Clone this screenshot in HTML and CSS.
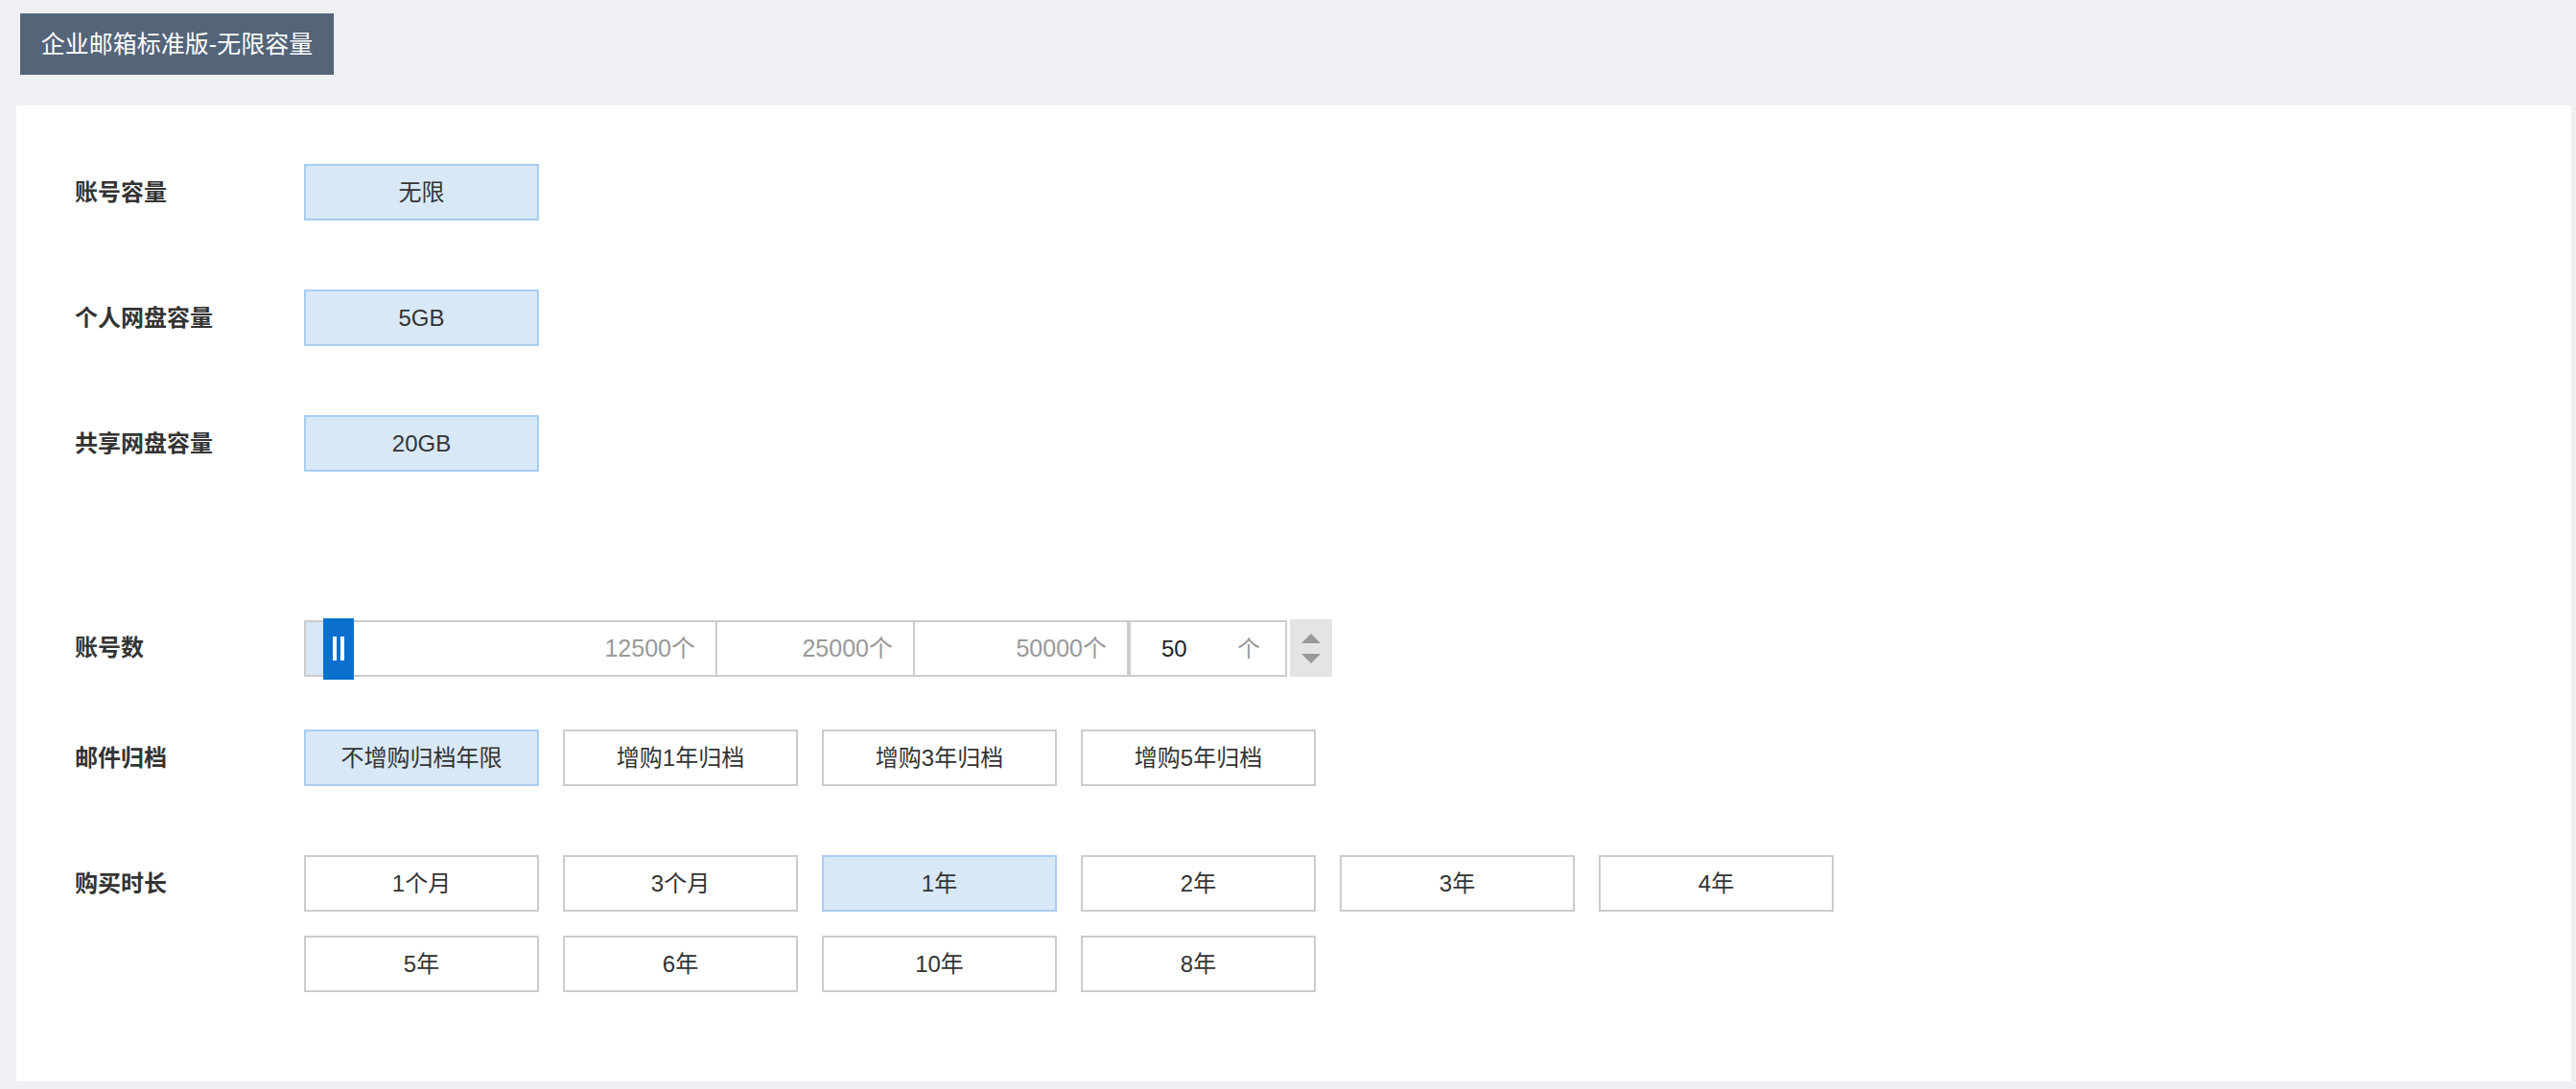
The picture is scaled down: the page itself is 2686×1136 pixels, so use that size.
FILE: index.html
```html
<!DOCTYPE html>
<html lang="zh-CN">

<head>
    <meta charset="UTF-8">
    <meta name="viewport" content="width=device-width, initial-scale=1.0">
    <title>企业邮箱标准版</title>
    <link rel="stylesheet" href="styles.css">
</head>

<body>
    <div class="page">
        <div class="title">企业邮箱标准版-无限容量</div>

        <div class="panel">
            <div class="row">
                <div class="label">账号容量</div>
                <div class="options">
                    <div class="opt active">无限</div>
                </div>
            </div>
            <div class="row">
                <div class="label">个人网盘容量</div>
                <div class="options">
                    <div class="opt active">5GB</div>
                </div>
            </div>
            <div class="row row-wide">
                <div class="label">共享网盘容量</div>
                <div class="options">
                    <div class="opt active">20GB</div>
                </div>
            </div>

            <div class="row row-slim">
                <div class="label">账号数</div>
                <div class="slider">
                    <div class="track">
                        <div class="fill"></div>
                        <div class="handle"><i></i><i></i></div>
                        <div class="seg seg1">12500个</div>
                        <div class="seg seg2">25000个</div>
                        <div class="seg seg3">50000个</div>
                    </div>
                    <div class="count">
                        <span class="num">50</span>
                        <span class="unit">个</span>
                    </div>
                    <div class="spin">
                        <span class="up"></span>
                        <span class="down"></span>
                    </div>
                </div>
            </div>

            <div class="row">
                <div class="label">邮件归档</div>
                <div class="options">
                    <div class="opt active">不增购归档年限</div>
                    <div class="opt">增购1年归档</div>
                    <div class="opt">增购3年归档</div>
                    <div class="opt">增购5年归档</div>
                </div>
            </div>

            <div class="row row-last">
                <div class="label">购买时长</div>
                <div class="options">
                    <div class="opt">1个月</div>
                    <div class="opt">3个月</div>
                    <div class="opt active">1年</div>
                    <div class="opt">2年</div>
                    <div class="opt">3年</div>
                    <div class="opt">4年</div>
                    <div class="opt">5年</div>
                    <div class="opt">6年</div>
                    <div class="opt">10年</div>
                    <div class="opt">8年</div>
                </div>
            </div>
        </div>
    </div>
</body>

</html>
```

FILE: styles.css
```css
* {
    margin: 0;
    padding: 0;
    box-sizing: border-box;
}

body {
    background-color: #eef0f4;
    font-family: "Liberation Sans", "Noto Sans CJK SC", sans-serif;
    color: #333;
}

.page {
    padding: 14px 5px 8px 17px;
}

.title {
    margin-left: 4px;
    width: 327px;
    height: 64px;
    line-height: 64px;
    text-align: center;
    white-space: nowrap;
    background-color: #546479;
    color: #fff;
    font-size: 25px;
}

.panel {
    margin-top: 32px;
    background-color: #fff;
    padding: 61px 0 93px 61px;
}

.row {
    display: flex;
    align-items: flex-start;
    margin-bottom: 72px;
}

.row-wide {
    margin-bottom: 154px;
}

.row-slim {
    margin-bottom: 55px;
}

.row-last {
    margin-bottom: 0;
}

.label {
    width: 239px;
    flex-shrink: 0;
    height: 59px;
    line-height: 59px;
    font-size: 24px;
    font-weight: bold;
    color: #333;
}

.options {
    display: flex;
    flex-wrap: wrap;
    gap: 25px;
    width: 1620px;
}

.opt {
    width: 245px;
    height: 59px;
    line-height: 55px;
    border: 2px solid #cccccc;
    text-align: center;
    font-size: 24px;
    color: #333;
    background-color: #fff;
}

.opt.active {
    background-color: #d8e8f7;
    border-color: #a9cdee;
}

/* 账号数滑块 */
.slider {
    display: flex;
    align-items: center;
}

.track {
    position: relative;
    display: flex;
    width: 860px;
    height: 59px;
    border: 2px solid #cccccc;
}

.fill {
    position: absolute;
    left: 0;
    top: 0;
    width: 20px;
    height: 100%;
    background-color: #d8e8f7;
}

.handle {
    position: absolute;
    left: 18px;
    top: -4px;
    width: 32px;
    height: 64px;
    background-color: #0b70cd;
    display: flex;
    justify-content: center;
    align-items: center;
    gap: 4px;
}

.handle i {
    width: 4px;
    height: 25px;
    background-color: #fff;
}

.seg {
    height: 100%;
    line-height: 55px;
    text-align: right;
    padding-right: 21px;
    font-size: 25px;
    color: #999;
    border-right: 2px solid #cccccc;
}

.seg1 {
    width: 429px;
}

.seg2 {
    width: 206px;
}

.seg3 {
    flex: 1;
    border-right: none;
}

.count {
    display: flex;
    justify-content: space-between;
    width: 165px;
    height: 59px;
    line-height: 55px;
    border: 2px solid #cccccc;
    padding: 0 26px 0 32px;
    font-size: 24px;
}

.count .num {
    color: #222;
}

.count .unit {
    color: #999;
}

.spin {
    margin-left: 3px;
    width: 44px;
    height: 60px;
    background-color: #e4e4e4;
    display: flex;
    flex-direction: column;
    align-items: center;
    justify-content: center;
    gap: 11px;
}

.spin .up {
    width: 0;
    height: 0;
    border-left: 10px solid transparent;
    border-right: 10px solid transparent;
    border-bottom: 10px solid #999;
}

.spin .down {
    width: 0;
    height: 0;
    border-left: 10px solid transparent;
    border-right: 10px solid transparent;
    border-top: 10px solid #999;
}
```
